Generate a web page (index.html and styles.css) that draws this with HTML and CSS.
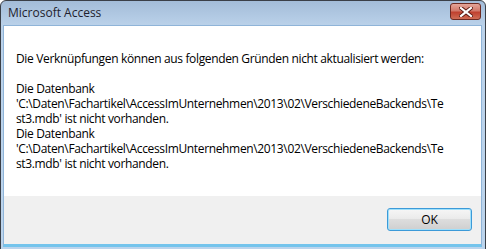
FILE: index.html
```html
<!DOCTYPE html>
<html lang="de">
<head>
  <meta charset="UTF-8">
  <title>Microsoft Access</title>
  <link rel="stylesheet" href="styles.css">
</head>
<body>
  <div class="window">
    <div class="titlebar">
      <span class="title">Microsoft Access</span>
      <span class="close">
        <svg width="14" height="10" viewBox="0 0 14 10">
          <path d="M2 1 L12 9 M12 1 L2 9" stroke="#5a1a12" stroke-width="4" stroke-linecap="square"/>
          <path d="M2 1 L12 9 M12 1 L2 9" stroke="#fff" stroke-width="2.2" stroke-linecap="square"/>
        </svg>
      </span>
    </div>
    <div class="client">
      <div class="message">
        <p>Die Verknüpfungen können aus folgenden Gründen nicht aktualisiert werden:</p>
        <p>Die Datenbank<br>
        'C:\Daten\Fachartikel\AccessImUnternehmen\2013\02\VerschiedeneBackends\Te<br>
        st3.mdb' ist nicht vorhanden.<br>
        Die Datenbank<br>
        'C:\Daten\Fachartikel\AccessImUnternehmen\2013\02\VerschiedeneBackends\Te<br>
        st3.mdb' ist nicht vorhanden.</p>
      </div>
      <div class="buttons">
        <button class="btn">OK</button>
      </div>
    </div>
  </div>
</body>
</html>
```

FILE: styles.css
```css
body {
  margin: 0;
  font-family: "Open Sans", "Noto Sans", sans-serif;
  font-size: 12px;
}
.window {
  width: 479px;
  height: 246px;
  border: 1px solid #3a3f47;
  border-radius: 6px 6px 0 0;
  background: linear-gradient(#a3bcd8, #bbd2ea 25px, #bcd4ec);
  display: flex;
  flex-direction: column;
  padding: 0 3px 2px 2px;
}
.titlebar {
  height: 24px;
  display: flex;
  align-items: center;
  justify-content: space-between;
  padding: 0 0 0 5px;
}
.title {
  color: #1e1e2e;
  font-size: 12px;
  margin-top: -2px;
}
.close {
  width: 29px;
  height: 15px;
  margin-top: -3px;
  margin-right: 1px;
  border: 1px solid #6d2a22;
  border-radius: 3px;
  background: linear-gradient(#e4a598, #d2796a 45%, #c0412f 55%, #cf6d55);
  display: flex;
  align-items: center;
  justify-content: center;
}
.client {
  flex: 1;
  display: flex;
  flex-direction: column;
  background: #fff;
  border: 1px solid #8fb4d8;
  border-bottom: 3px solid #74c4ec;
}
.message {
  flex: 1;
  padding: 25px 0 0 12px;
  color: #000;
  line-height: 15px;
  letter-spacing: -0.35px;
}
.message p {
  margin: 0 0 15px;
}
.buttons {
  height: 48px;
  background: #f0f0f0;
  display: flex;
  justify-content: flex-end;
  align-items: center;
  padding-right: 9px;
}
.btn {
  width: 85px;
  height: 23px;
  font-family: inherit;
  font-size: 12px;
  color: #000;
  border: 1px solid #3c9ad8;
  border-radius: 3px;
  background: linear-gradient(#f6f6f6, #ebebeb 45%, #dddddd 50%, #cfcfcf);
  box-shadow: inset 0 0 0 1px #9fe0fb;
  margin-top: -1px;
}
```
